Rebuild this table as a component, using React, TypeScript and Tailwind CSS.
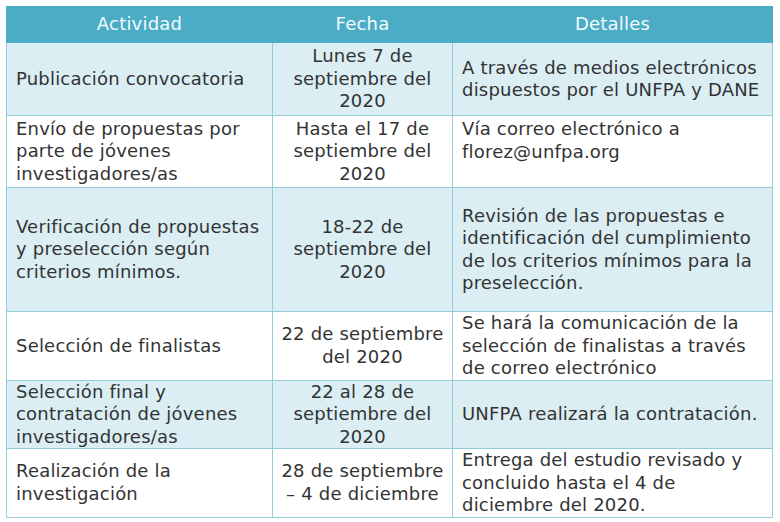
import React from "react"

const rows = [
    { a: ["Publicación convocatoria"], f: ["Lunes 7 de", "septiembre del", "2020"], d: ["A través de medios electrónicos", "dispuestos por el UNFPA y DANE"], h: "h-[73px]", shade: true },
    { a: ["Envío de propuestas por", "parte de jóvenes", "investigadores/as"], f: ["Hasta el 17 de", "septiembre del", "2020"], d: ["Vía correo electrónico a", "florez@unfpa.org"], h: "h-[72px]", shade: false, top: true },
    { a: ["Verificación de propuestas", "y preselección según", "criterios mínimos."], f: ["18-22 de", "septiembre del", "2020"], d: ["Revisión de las propuestas e", "identificación del cumplimiento", "de los criterios mínimos para la", "preselección."], h: "h-[124px]", shade: true },
    { a: ["Selección de finalistas"], f: ["22 de septiembre", "del 2020"], d: ["Se hará la comunicación de la", "selección de finalistas a través", "de correo electrónico"], h: "h-[67px]", shade: false },
    { a: ["Selección final y", "contratación de jóvenes", "investigadores/as"], f: ["22 al 28 de", "septiembre del", "2020"], d: ["UNFPA realizará la contratación."], h: "h-[68px]", shade: true },
    { a: ["Realización de la", "investigación"], f: ["28 de septiembre", "– 4 de diciembre"], d: ["Entrega del estudio revisado y", "concluido hasta el 4 de", "diciembre del 2020."], h: "h-[67px]", shade: false },
]

const Lines = ({ items }: { items: string[] }) => (
    <>
        {items.map((t, i) => <div key={i} className="whitespace-nowrap">{t}</div>)}
    </>
)

export default function App() {
    return (
        <div className="min-h-[522px] bg-white pl-[6px] pt-[6px]" style={{ fontFamily: "'DejaVu Sans', sans-serif" }}>
            <table className="w-[766px] table-fixed border-collapse text-[18px] leading-[22.5px] tracking-[0.2px] text-[#333]">
                <colgroup>
                    <col className="w-[266px]" />
                    <col className="w-[180px]" />
                    <col className="w-[320px]" />
                </colgroup>
                <thead>
                    <tr className="h-[36px] bg-[#4bacc6] text-[#f4fafc]">
                        <th className="border border-[#4bacc6] font-normal">Actividad</th>
                        <th className="border border-[#4bacc6] font-normal">Fecha</th>
                        <th className="border border-[#4bacc6] font-normal">Detalles</th>
                    </tr>
                </thead>
                <tbody>
                    {rows.map((r, i) => (
                        <tr key={i} className={`${r.h} ${r.shade ? "bg-[#daeef3]" : "bg-white"}`}>
                            <td className="border border-[#92cddc] px-[9px] align-middle"><Lines items={r.a} /></td>
                            <td className="border border-[#92cddc] px-[4px] text-center align-middle"><Lines items={r.f} /></td>
                            <td className={`border border-[#92cddc] px-[9px] ${r.top ? "align-top pt-[2px]" : "align-middle"}`}><Lines items={r.d} /></td>
                        </tr>
                    ))}
                </tbody>
            </table>
        </div>
    )
}
